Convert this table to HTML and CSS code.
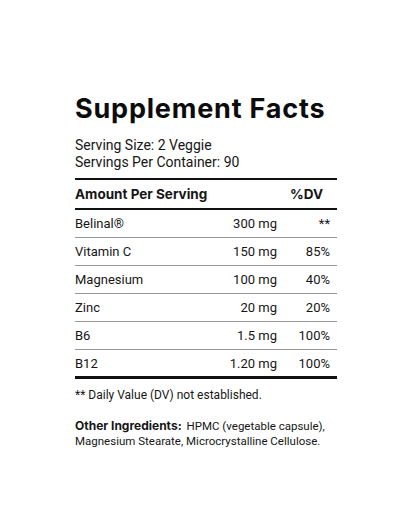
FILE: index.html
```html
<!DOCTYPE html>
<html lang="en">
<head>
    <meta charset="UTF-8">
    <meta name="viewport" content="width=device-width, initial-scale=1.0">
    <title>Supplement Facts</title>
    <link rel="stylesheet" href="styles.css">
</head>
<body>
    <div class="facts">
        <h1>Supplement Facts</h1>
        <div class="serving">
            <p>Serving Size: 2 Veggie</p>
            <p>Servings Per Container: 90</p>
        </div>

        <table class="nutrients">
            <thead>
                <tr>
                    <th class="name">Amount Per Serving</th>
                    <th class="amount"></th>
                    <th class="dv">%DV</th>
                </tr>
            </thead>
            <tbody>
                <tr><td class="name">Belinal®</td><td class="amount">300 mg</td><td class="dv">**</td></tr>
                <tr><td class="name">Vitamin C</td><td class="amount">150 mg</td><td class="dv">85%</td></tr>
                <tr><td class="name">Magnesium</td><td class="amount">100 mg</td><td class="dv">40%</td></tr>
                <tr><td class="name">Zinc</td><td class="amount">20 mg</td><td class="dv">20%</td></tr>
                <tr><td class="name">B6</td><td class="amount">1.5 mg</td><td class="dv">100%</td></tr>
                <tr><td class="name">B12</td><td class="amount">1.20 mg</td><td class="dv">100%</td></tr>
            </tbody>
        </table>

        <p class="note">** Daily Value (DV) not established.</p>

        <p class="other"><strong>Other Ingredients:</strong> HPMC (vegetable capsule), Magnesium Stearate, Microcrystalline Cellulose.</p>
    </div>
</body>
</html>
```

FILE: styles.css
```css
body {
    font-family: Roboto, "Noto Sans", sans-serif;
    margin: 0;
    padding: 0;
    background-color: #fff;
    color: #161616;
}

.facts {
    width: 262px;
    margin-left: 75px;
    padding-top: 93px;
}

.facts h1 {
    font-family: Inter, sans-serif;
    font-size: 27px;
    font-weight: 700;
    margin: 0;
    line-height: 32px;
    letter-spacing: 0.8px;
    color: #0c0c0c;
}

.serving {
    margin-top: 12px;
    padding-bottom: 7px;
    border-bottom: 2px solid #111;
}

.serving p {
    margin: 0;
    font-size: 14px;
    line-height: 17px;
}

.nutrients {
    width: 100%;
    border-collapse: collapse;
    font-size: 13px;
    border-bottom: 3px solid #111;
}

.nutrients th {
    font-family: Inter, sans-serif;
    font-weight: 700;
    font-size: 13.5px;
    height: 28px;
    border-bottom: 2px solid #111;
    padding: 0;
    white-space: nowrap;
}

.nutrients td {
    height: 27px;
    padding: 0;
    border-bottom: 1px solid #999;
}

.nutrients tbody tr:last-child td {
    height: 26px;
    border-bottom: none;
}

.name {
    text-align: left;
}

.amount {
    text-align: right;
    width: 100px;
}

.nutrients th.dv {
    text-align: right;
    padding-right: 14px;
}

.nutrients td.dv {
    text-align: right;
    width: 62px;
    padding-right: 7px;
}

.note {
    margin: 8px 0 0;
    font-size: 12px;
    line-height: 16px;
}

.other {
    margin: 15px 0 0;
    font-size: 11.5px;
    line-height: 15px;
}

.other strong {
    font-family: Inter, sans-serif;
    font-size: 12px;
    font-weight: 700;
    margin-right: 2px;
}
```
